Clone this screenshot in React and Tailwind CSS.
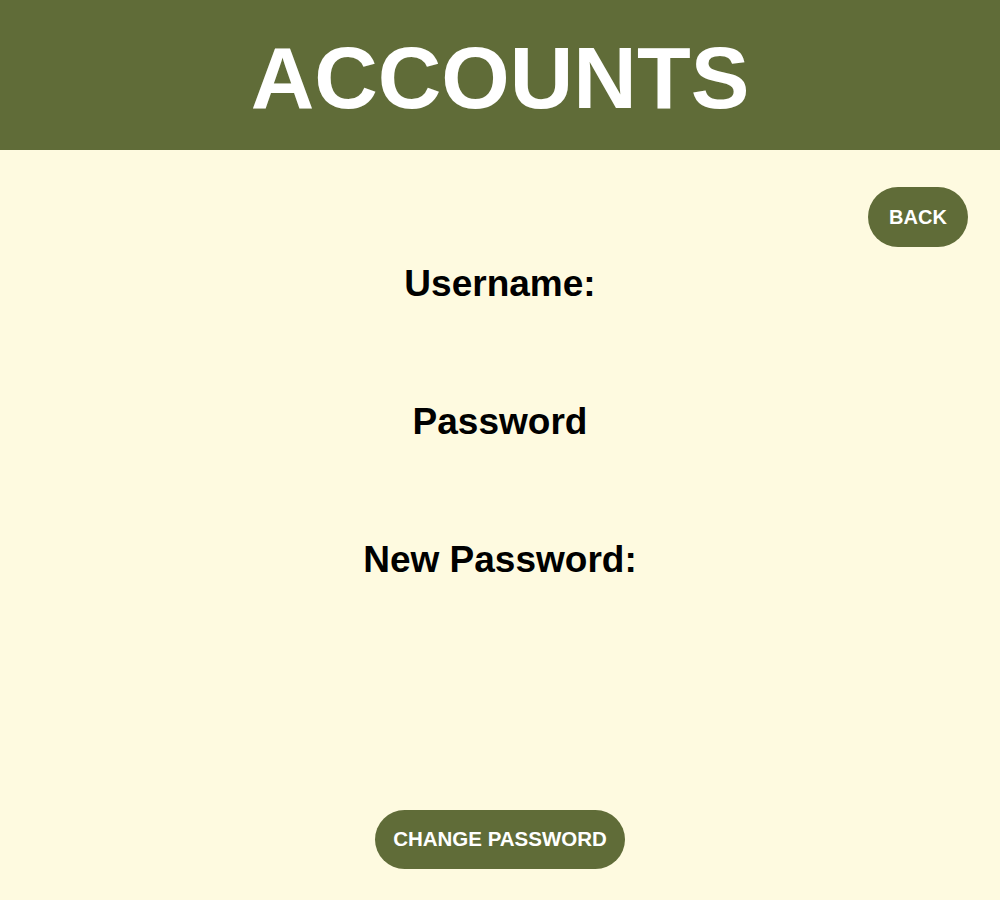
import React from "react";

export default function App() {
  return (
    <div
      className="w-[1000px] h-[900px] flex flex-col bg-[#fefae0] text-black"
      style={{ fontFamily: '"Liberation Sans", Arial, sans-serif' }}
    >
      <header className="h-[150px] shrink-0 bg-[#606c38] flex items-center justify-center pt-[5px]">
        <h1 className="text-[88px] leading-none font-bold text-white">ACCOUNTS</h1>
      </header>
      <main className="flex-1 flex flex-col items-center pt-[37px] pb-[31px]">
        <div className="w-full flex justify-end pr-[32px]">
          <button className="w-[100px] h-[60px] rounded-full bg-[#606c38] text-white text-[20px] font-bold leading-none flex items-center justify-center">
            BACK
          </button>
        </div>
        <div className="mt-[17px] flex flex-col items-center gap-[98px]">
          <p className="text-[37px] leading-[40px] font-bold">Username:</p>
          <p className="text-[37px] leading-[40px] font-bold">Password</p>
          <p className="text-[37px] leading-[40px] font-bold">New Password:</p>
        </div>
        <button className="mt-auto w-[250px] h-[59px] rounded-full bg-[#606c38] text-white text-[20.5px] font-bold leading-none flex items-center justify-center">
          CHANGE PASSWORD
        </button>
      </main>
    </div>
  );
}
